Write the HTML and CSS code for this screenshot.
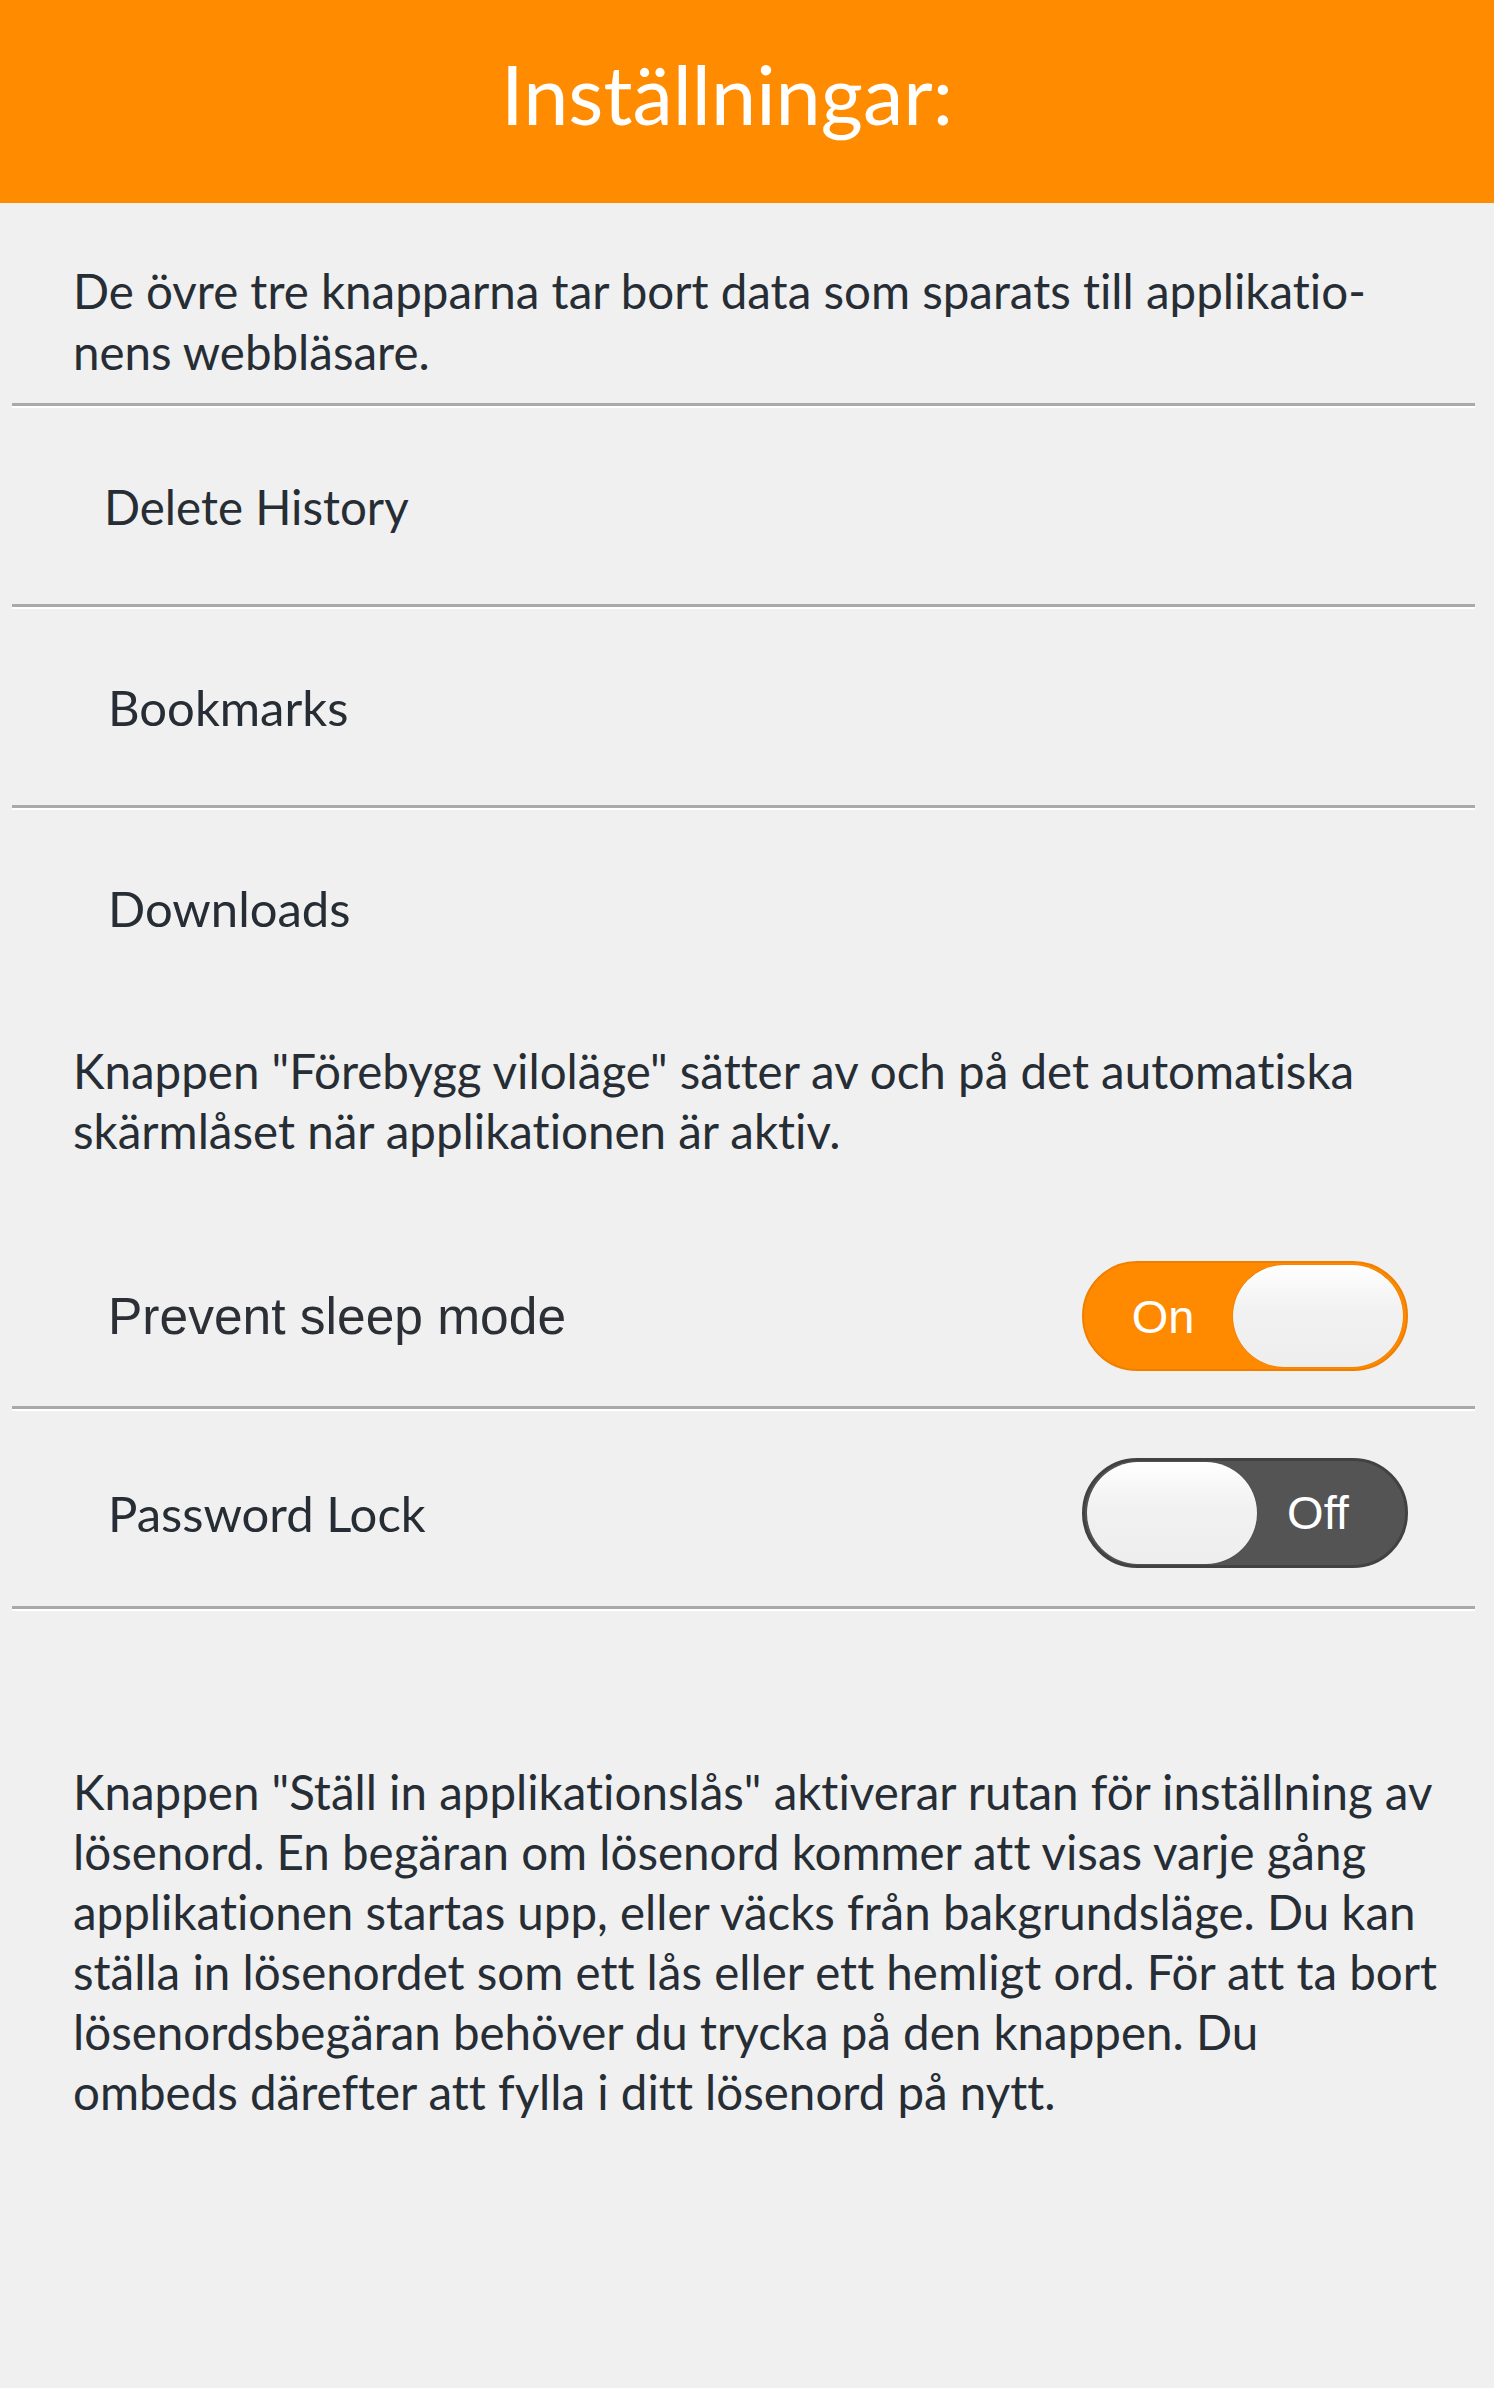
FILE: index.html
```html
<!DOCTYPE html>
<html lang="sv">
<head>
<meta charset="utf-8">
<title>Inställningar</title>
<link rel="stylesheet" href="styles.css">
</head>
<body>
<header class="topbar">
  <h1 class="title">Inställningar:</h1>
</header>
<main class="settings">
  <p class="note note-first">De övre tre knapparna tar bort data som sparats till applikatio-<br>nens webbläsare.</p>
  <div class="divider"></div>
  <div class="row row-action"><span class="label label-d">Delete History</span></div>
  <div class="divider"></div>
  <div class="row row-action"><span class="label label-b">Bookmarks</span></div>
  <div class="divider"></div>
  <div class="row row-action"><span class="label label-b">Downloads</span></div>
  <p class="note note-sleep">Knappen "Förebygg viloläge" sätter av och på det automatiska<br>skärmlåset när applikationen är aktiv.</p>
  <div class="row row-toggle row-sleep">
    <span class="label label-sans">Prevent sleep mode</span>
    <div class="toggle toggle-on">
      <span class="toggle-text">On</span>
      <span class="knob"></span>
    </div>
  </div>
  <div class="divider"></div>
  <div class="row row-toggle row-lock">
    <span class="label label-b">Password Lock</span>
    <div class="toggle toggle-off">
      <span class="knob"></span>
      <span class="toggle-text">Off</span>
    </div>
  </div>
  <div class="divider"></div>
  <p class="note note-lock">Knappen "Ställ in applikationslås" aktiverar rutan för inställning av<br>lösenord. En begäran om lösenord kommer att visas varje gång<br>applikationen startas upp, eller väcks från bakgrundsläge. Du kan<br>ställa in lösenordet som ett lås eller ett hemligt ord. För att ta bort<br>lösenordsbegäran behöver du trycka på den knappen. Du<br>ombeds därefter att fylla i ditt lösenord på nytt.</p>
</main>
</body>
</html>
```

FILE: styles.css
```css
html, body {
  margin: 0;
  padding: 0;
}
body {
  background: #f0f0f0;
  font-family: Lato, "Open Sans", sans-serif;
  font-variant-ligatures: none;
  color: #272d34;
  width: 1494px;
  min-height: 2388px;
}
.topbar {
  height: 203px;
  background: #ff8c00;
  display: flex;
  align-items: center;
  justify-content: center;
  padding-bottom: 16px;
  box-sizing: border-box;
}
.title {
  margin: 0;
  font-weight: 400;
  font-size: 81px;
  color: #ffffff;
  padding-right: 40px;
}
.settings {
  margin: 0 19px 0 12px;
  display: flex;
  flex-direction: column;
}
.note {
  margin: 0;
  padding-left: 61px;
  font-size: 47.5px;
  line-height: 60px;
  white-space: nowrap;
}
.note-first {
  margin-top: 57px;
  margin-bottom: 21px;
  line-height: 61px;
}
.note-sleep {
  margin-top: 35px;
}
.note-lock {
  margin-top: 151px;
}
.divider {
  height: 3px;
  background: #a9a9a9;
  border-bottom: 2px solid #ffffff;
}
.row {
  display: flex;
  align-items: center;
  box-sizing: border-box;
}
.row-action {
  height: 196px;
  padding-left: 92px;
}
.label {
  font-size: 49px;
}
.label-d {
  font-size: 47.5px;
}
.label-b {
  padding-left: 4px;
}
.label-sans {
  font-family: "Liberation Sans", Arial, sans-serif;
  font-size: 51.5px;
  color: #2c3036;
  padding-left: 4px;
}
.row-toggle {
  justify-content: space-between;
  padding-left: 92px;
  padding-right: 67px;
}
.row-sleep {
  margin-top: 65px;
  height: 180px;
}
.row-lock {
  height: 195px;
  padding-top: 8px;
}
.toggle {
  width: 326px;
  height: 110px;
  border-radius: 55px;
  box-sizing: border-box;
  display: flex;
  align-items: center;
  padding: 0 3px;
  font-family: "Liberation Sans", Arial, sans-serif;
  font-size: 47px;
  color: #ffffff;
}
.toggle-on {
  background: #ff8a00;
  border: 2px solid #f07f00;
}
.toggle-off {
  background: #545454;
  border: 3px solid #424242;
  padding: 0 2px;
}
.toggle-text {
  flex: 1;
  text-align: center;
}
.toggle-on .toggle-text {
  padding-left: 6px;
}
.toggle-off .toggle-text {
  padding-right: 24px;
}
.knob {
  width: 170px;
  height: 102px;
  border-radius: 51px;
  background: linear-gradient(180deg, #ffffff 0%, #f1f1f1 45%, #eeeeee 100%);
  box-shadow: 0 0 1px rgba(0, 0, 0, 0.35);
}
```
